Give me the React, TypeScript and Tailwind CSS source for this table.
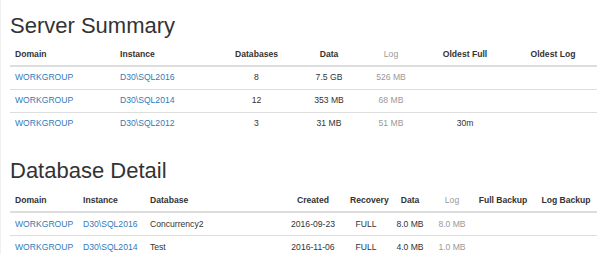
const servers = [
  { domain: 'WORKGROUP', instance: 'D30\\SQL2016', dbs: '8', data: '7.5 GB', log: '526 MB', full: '', logb: '' },
  { domain: 'WORKGROUP', instance: 'D30\\SQL2014', dbs: '12', data: '353 MB', log: '68 MB', full: '', logb: '' },
  { domain: 'WORKGROUP', instance: 'D30\\SQL2012', dbs: '3', data: '31 MB', log: '51 MB', full: '30m', logb: '' },
];

const databases = [
  { domain: 'WORKGROUP', instance: 'D30\\SQL2016', name: 'Concurrency2', created: '2016-09-23', recovery: 'FULL', data: '8.0 MB', log: '8.0 MB' },
  { domain: 'WORKGROUP', instance: 'D30\\SQL2014', name: 'Test', created: '2016-11-06', recovery: 'FULL', data: '4.0 MB', log: '1.0 MB' },
];

const th = 'h-[23px] px-[5px] pt-0 pb-0 align-middle font-bold border-b-2 border-[#ddd] text-[#333]';
const td = 'h-[23px] px-[5px] py-0 align-middle border-t border-[#ddd]';

export default function App() {
  return (
    <div className="w-[600px] h-[254px] bg-white border-l border-[#f0f0f0] overflow-hidden font-['Liberation_Sans',Arial,sans-serif] text-[#333]">
      <div className="pl-[9px] pr-[3px]">
        <h2 className="pt-[14px] mb-[5px] text-[22px] leading-[1.1] font-normal text-[#333]">Server Summary</h2>
        <table className="w-full table-fixed border-collapse text-[8.6px]">
          <colgroup>
            <col className="w-[105px]" />
            <col className="w-[101px]" />
            <col className="w-[81px]" />
            <col className="w-[64px]" />
            <col className="w-[60px]" />
            <col className="w-[88px]" />
            <col className="w-[88px]" />
          </colgroup>
          <thead>
            <tr>
              <th className={`${th} text-left`}>Domain</th>
              <th className={`${th} text-left`}>Instance</th>
              <th className={`${th} text-center`}>Databases</th>
              <th className={`${th} text-center`}>Data</th>
              <th className={`${th} text-center !font-normal !text-[#999]`}>Log</th>
              <th className={`${th} text-center`}>Oldest Full</th>
              <th className={`${th} text-center`}>Oldest Log</th>
            </tr>
          </thead>
          <tbody>
            {servers.map((s, i) => (
              <tr key={i} className={i === 0 ? '[&>td]:border-t-0' : ''}>
                <td className={`${td} text-left text-[#337ab7]`}>{s.domain}</td>
                <td className={`${td} text-left text-[#337ab7]`}>{s.instance}</td>
                <td className={`${td} text-center`}>{s.dbs}</td>
                <td className={`${td} text-center`}>{s.data}</td>
                <td className={`${td} text-center text-[#999]`}>{s.log}</td>
                <td className={`${td} text-center`}>{s.full}</td>
                <td className={`${td} text-center`}>{s.logb}</td>
              </tr>
            ))}
          </tbody>
        </table>

        <h2 className="pt-[24px] mb-[6px] text-[22px] leading-[1.1] font-normal text-[#333]">Database Detail</h2>
        <table className="w-full table-fixed border-collapse text-[8.6px]">
          <colgroup>
            <col className="w-[68px]" />
            <col className="w-[67px]" />
            <col className="w-[136px]" />
            <col className="w-[64px]" />
            <col className="w-[42px]" />
            <col className="w-[46px]" />
            <col className="w-[38px]" />
            <col className="w-[64px]" />
            <col className="w-[62px]" />
          </colgroup>
          <thead>
            <tr>
              <th className={`${th} text-left`}>Domain</th>
              <th className={`${th} text-left`}>Instance</th>
              <th className={`${th} text-left`}>Database</th>
              <th className={`${th} text-center`}>Created</th>
              <th className={`${th} text-center`}>Recovery</th>
              <th className={`${th} text-center`}>Data</th>
              <th className={`${th} text-center !font-normal !text-[#999]`}>Log</th>
              <th className={`${th} text-center whitespace-nowrap`}>Full Backup</th>
              <th className={`${th} text-center whitespace-nowrap`}>Log Backup</th>
            </tr>
          </thead>
          <tbody>
            {databases.map((d, i) => (
              <tr key={i} className={i === 0 ? '[&>td]:border-t-0' : ''}>
                <td className={`${td} text-left text-[#337ab7]`}>{d.domain}</td>
                <td className={`${td} text-left text-[#337ab7] whitespace-nowrap`}>{d.instance}</td>
                <td className={`${td} text-left`}>{d.name}</td>
                <td className={`${td} text-center`}>{d.created}</td>
                <td className={`${td} text-center`}>{d.recovery}</td>
                <td className={`${td} text-center whitespace-nowrap`}>{d.data}</td>
                <td className={`${td} text-center text-[#999] whitespace-nowrap`}>{d.log}</td>
                <td className={`${td} text-center`}></td>
                <td className={`${td} text-center`}></td>
              </tr>
            ))}
          </tbody>
        </table>
      </div>
    </div>
  );
}
